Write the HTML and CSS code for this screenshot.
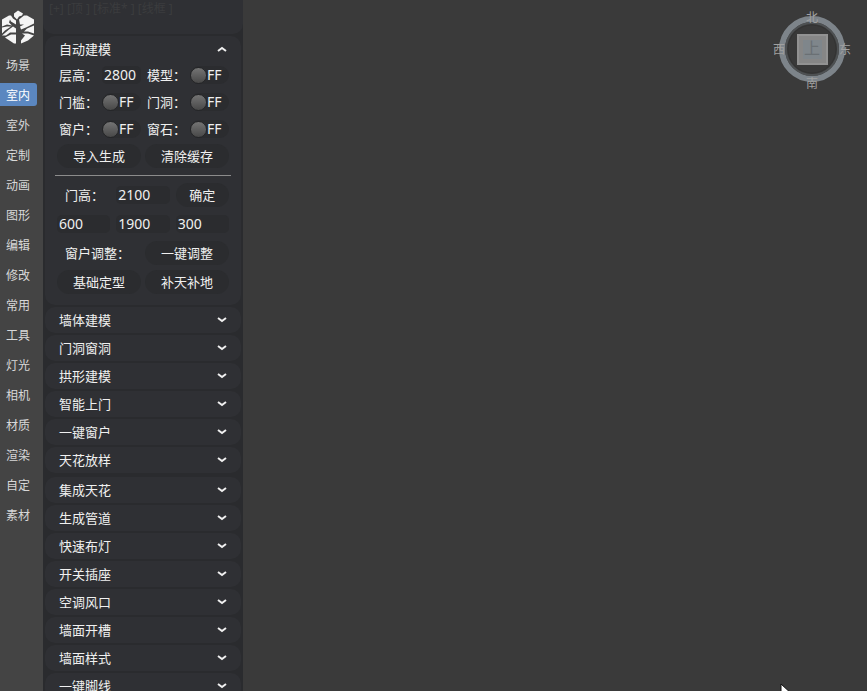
FILE: index.html
```html
<!DOCTYPE html>
<html lang="zh-CN">

<head>
    <meta charset="UTF-8">
    <meta name="viewport" content="width=device-width, initial-scale=1.0">
    <title>室内建模</title>
    <link rel="stylesheet" href="styles.css">
</head>

<body>
    <div class="app">
        <nav class="sidebar">
            <svg class="logo" viewBox="0 0 34 36" fill="#f4f4f4">
                <path d="M13 4 L17 1 L22 4 L21 6 L18 7 L16 10 L13 7 Z" />
                <path d="M1 10 L8 6 L10 6 L12 9 L15 11 L15 15 L10 12 L9 10 L8 13 L11 16 L6 15 L1 17 Z" />
                <path d="M1 18 L6 17 L10 17 L4 21 L1 24 Z" />
                <path d="M8 20 L12 17 L15 19 L15 23 L9 23 L5 26 L1 26 Z" />
                <path d="M4 28 L10 25 L15 25 L15 34 L13 34 Z" />
                <path d="M18 10 L23 6 L26 6 L33 10 L33 14 L25 18 L20 20 L19 17 L23 15 L19 15 Z" />
                <path d="M33 16 L33 24 L27 22 L23 22 L26 19 Z" />
                <path d="M21 24 L27 24 L33 26 L27 31 L20 34 L20 31 L24 26 Z" />
            </svg>
            <a href="#" class="nav-item">场景</a>
            <a href="#" class="nav-item active">室内</a>
            <a href="#" class="nav-item">室外</a>
            <a href="#" class="nav-item">定制</a>
            <a href="#" class="nav-item">动画</a>
            <a href="#" class="nav-item">图形</a>
            <a href="#" class="nav-item">编辑</a>
            <a href="#" class="nav-item">修改</a>
            <a href="#" class="nav-item">常用</a>
            <a href="#" class="nav-item">工具</a>
            <a href="#" class="nav-item">灯光</a>
            <a href="#" class="nav-item">相机</a>
            <a href="#" class="nav-item">材质</a>
            <a href="#" class="nav-item">渲染</a>
            <a href="#" class="nav-item">自定</a>
            <a href="#" class="nav-item">素材</a>
        </nav>

        <aside class="panel">
            <div class="view-label">[+] [顶 ] [标准* ] [线框 ]</div>

            <div class="group">
                <section class="card">
                    <button class="card-header" aria-expanded="true">自动建模
                        <svg class="arrow up" viewBox="0 0 10 8"><path d="M1 2 L5 5 L9 2" /></svg>
                    </button>
                    <div class="card-body">
                        <div class="fields">
                            <div class="field">
                                <label for="floor">层高：</label>
                                <input type="text" class="text-input" id="floor" value="2800">
                            </div>
                            <div class="field">
                                <label for="model">模型：</label>
                                <span class="toggle"><input type="checkbox" id="model">FF</span>
                            </div>
                            <div class="field">
                                <label for="sill">门槛：</label>
                                <span class="toggle"><input type="checkbox" id="sill">FF</span>
                            </div>
                            <div class="field">
                                <label for="doorway">门洞：</label>
                                <span class="toggle"><input type="checkbox" id="doorway">FF</span>
                            </div>
                            <div class="field">
                                <label for="window">窗户：</label>
                                <span class="toggle"><input type="checkbox" id="window">FF</span>
                            </div>
                            <div class="field">
                                <label for="stone">窗石：</label>
                                <span class="toggle"><input type="checkbox" id="stone">FF</span>
                            </div>
                        </div>
                        <div class="row two">
                            <button class="btn">导入生成</button>
                            <button class="btn">清除缓存</button>
                        </div>
                        <hr>
                        <div class="row three">
                            <label class="row-label" for="door-height">门高：</label>
                            <input type="text" class="text-input" id="door-height" value="2100">
                            <button class="btn">确定</button>
                        </div>
                        <div class="row three sizes">
                            <input type="text" class="text-input" aria-label="窗台高" value="600">
                            <input type="text" class="text-input" aria-label="窗高" value="1900">
                            <input type="text" class="text-input" aria-label="窗顶高" value="300">
                        </div>
                        <div class="row two">
                            <span class="row-label">窗户调整：</span>
                            <button class="btn">一键调整</button>
                        </div>
                        <div class="row two">
                            <button class="btn">基础定型</button>
                            <button class="btn">补天补地</button>
                        </div>
                    </div>
                </section>

                <button class="card card-header">墙体建模
                    <svg class="arrow" viewBox="0 0 10 8"><path d="M1 2 L5 5 L9 2" /></svg>
                </button>
                <button class="card card-header">门洞窗洞
                    <svg class="arrow" viewBox="0 0 10 8"><path d="M1 2 L5 5 L9 2" /></svg>
                </button>
                <button class="card card-header">拱形建模
                    <svg class="arrow" viewBox="0 0 10 8"><path d="M1 2 L5 5 L9 2" /></svg>
                </button>
                <button class="card card-header">智能上门
                    <svg class="arrow" viewBox="0 0 10 8"><path d="M1 2 L5 5 L9 2" /></svg>
                </button>
                <button class="card card-header">一键窗户
                    <svg class="arrow" viewBox="0 0 10 8"><path d="M1 2 L5 5 L9 2" /></svg>
                </button>
                <button class="card card-header">天花放样
                    <svg class="arrow" viewBox="0 0 10 8"><path d="M1 2 L5 5 L9 2" /></svg>
                </button>
            </div>

            <div class="group">
                <button class="card card-header">集成天花
                    <svg class="arrow" viewBox="0 0 10 8"><path d="M1 2 L5 5 L9 2" /></svg>
                </button>
                <button class="card card-header">生成管道
                    <svg class="arrow" viewBox="0 0 10 8"><path d="M1 2 L5 5 L9 2" /></svg>
                </button>
                <button class="card card-header">快速布灯
                    <svg class="arrow" viewBox="0 0 10 8"><path d="M1 2 L5 5 L9 2" /></svg>
                </button>
                <button class="card card-header">开关插座
                    <svg class="arrow" viewBox="0 0 10 8"><path d="M1 2 L5 5 L9 2" /></svg>
                </button>
                <button class="card card-header">空调风口
                    <svg class="arrow" viewBox="0 0 10 8"><path d="M1 2 L5 5 L9 2" /></svg>
                </button>
                <button class="card card-header">墙面开槽
                    <svg class="arrow" viewBox="0 0 10 8"><path d="M1 2 L5 5 L9 2" /></svg>
                </button>
                <button class="card card-header">墙面样式
                    <svg class="arrow" viewBox="0 0 10 8"><path d="M1 2 L5 5 L9 2" /></svg>
                </button>
                <button class="card card-header">一键脚线
                    <svg class="arrow" viewBox="0 0 10 8"><path d="M1 2 L5 5 L9 2" /></svg>
                </button>
            </div>
        </aside>

        <main class="viewport">
            <!-- 视图导航 -->
            <svg class="compass" viewBox="0 0 80 84">
                <circle cx="40" cy="42" r="30" fill="none" stroke="#7d848a" stroke-width="6" />
                <circle cx="40" cy="42" r="26" fill="#393939" stroke="#4e5153" stroke-width="2" />
                <circle cx="40" cy="42" r="24" fill="none" stroke="#333" stroke-width="1" />
                <rect x="26" y="28" width="29" height="29" fill="#868686" stroke="#929292" stroke-width="2" />
                <rect x="31" y="33" width="19" height="19" fill="#7f868b" />
                <text class="face" x="40" y="47">上</text>
                <text x="40" y="15">北</text>
                <text x="40" y="81">南</text>
                <text x="7" y="47">西</text>
                <text x="73" y="47">东</text>
            </svg>
            <svg class="cursor" viewBox="0 0 14 20">
                <path d="M1 1 V17 L5 13 L8 19 L10 18 L8 12 H13 Z" fill="#fff" stroke="#111" />
            </svg>
        </main>
    </div>
</body>

</html>
```
FILE: styles.css
```css
* {
    box-sizing: border-box;
}

body {
    margin: 0;
    font-family: "Noto Sans", "Noto Sans CJK SC", sans-serif;
    font-size: 13px;
    line-height: 18px;
    color: #f0f0f0;
    background-color: #3a3a3a;
}

button,
input {
    margin: 0;
    border: none;
    font: inherit;
    color: inherit;
}

.app {
    display: flex;
    height: 100vh;
    overflow: hidden;
}

/* 左侧导航 */
.sidebar {
    flex: none;
    width: 43px;
    padding-top: 9px;
    background-color: #444;
    display: flex;
    flex-direction: column;
    gap: 7px;
}

.logo {
    flex: none;
    width: 34px;
    height: 37px;
    margin-left: 1px;
}

.nav-item {
    flex: none;
    width: 37px;
    height: 23px;
    padding-left: 6px;
    font-size: 12px;
    line-height: 25px;
    color: #d8d8d8;
    text-decoration: none;
}

.nav-item.active {
    background-color: #5b87c0;
    border-radius: 0 3px 3px 0;
    color: #fff;
}

/* 功能面板 */
.panel {
    flex: none;
    width: 200px;
    background-color: #2a2b2e;
    display: flex;
    flex-direction: column;
    gap: 2px;
}

.view-label {
    flex: none;
    height: 34px;
    padding-left: 6px;
    border-radius: 0 0 10px 10px;
    background-color: #2f3034;
    font-size: 12px;
    color: #3b3c3e;
}

.group {
    flex: none;
    display: flex;
    flex-direction: column;
    gap: 2px;
    padding: 0 2px 2px;
}

.card {
    flex: none;
    border-radius: 10px;
    background-color: #2f3034;
}

.card-header {
    display: flex;
    align-items: center;
    justify-content: space-between;
    width: 100%;
    height: 26px;
    padding: 0 14px;
    text-align: left;
}

section .card-header {
    background: none;
}

.arrow {
    width: 10px;
    height: 8px;
    fill: none;
    stroke: #f0f0f0;
    stroke-width: 2;
}

.arrow.up {
    transform: rotate(180deg);
}

.card-body {
    padding: 4px 12px 6px;
}

.fields {
    display: grid;
    grid-template-columns: 1fr 1fr;
    gap: 9px 4px;
    margin-bottom: 6px;
}

.field {
    display: flex;
    height: 18px;
    padding-left: 2px;
}

.field label {
    width: 43px;
    white-space: nowrap;
}

.text-input {
    width: 100%;
    min-width: 0;
    height: 18px;
    padding: 0 2px;
    border-radius: 5px;
    background-color: #2b2c2f;
    font-size: 14px;
}

.field .text-input,
.toggle {
    flex: 1;
}

.toggle {
    display: flex;
    align-items: center;
    border-radius: 9px;
    background-color: #2b2c2f;
    font-size: 14px;
}

.toggle input {
    appearance: none;
    flex: none;
    width: 17px;
    height: 17px;
    border: 1px solid #242527;
    border-radius: 50%;
    background: linear-gradient(#747474, #484848);
}

.row {
    display: grid;
    align-items: center;
    margin-bottom: 5px;
}

.two {
    grid-template-columns: 1fr 1fr;
    gap: 4px;
}

.three {
    grid-template-columns: 1fr 1fr 1fr;
    gap: 6px;
}

.sizes {
    margin: 8px 0;
}

.row-label {
    padding-left: 8px;
    white-space: nowrap;
}

.btn {
    height: 24px;
    padding: 0;
    border-radius: 12px;
    background-color: #2b2c2f;
}

hr {
    height: 1px;
    margin: 7px -2px;
    border: none;
    background-color: #8c8c8c;
}

/* 视图区域 */
.viewport {
    position: relative;
    flex: 1;
    background-color: #3a3a3a;
}

.compass {
    position: absolute;
    top: 7px;
    right: 15px;
    width: 80px;
    height: 84px;
}

.compass text {
    font-size: 12px;
    text-anchor: middle;
    fill: #a0a0a0;
}

.compass .face {
    font-size: 16px;
    fill: #6a7074;
}

.cursor {
    position: absolute;
    right: 73px;
    bottom: -12px;
    width: 14px;
    height: 20px;
}
```
